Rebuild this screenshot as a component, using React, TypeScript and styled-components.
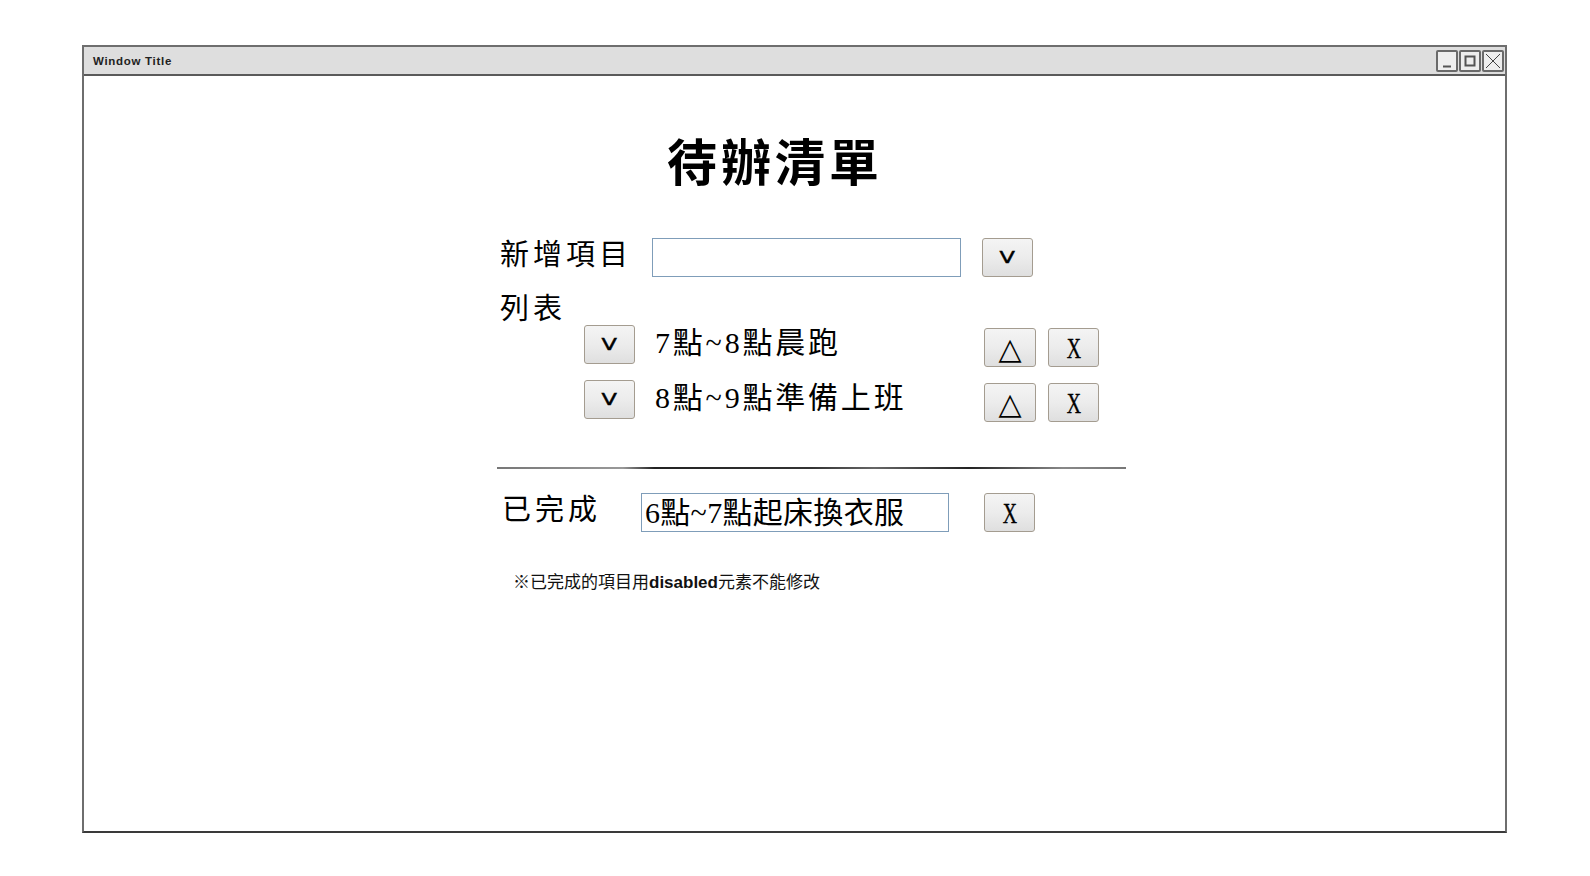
import React from 'react';
import styled, {createGlobalStyle} from 'styled-components';

const GlobalStyle = createGlobalStyle`
  html, body {
    margin: 0;
    padding: 0;
    background: #ffffff;
  }
  body {
    font-family: "Noto Sans CJK TC", "Liberation Sans", sans-serif;
    color: #000;
  }
`;

const CJK = `"Liberation Serif", "Noto Sans CJK TC", serif`;

const Page = styled.div`
  padding: 45px 0 0 82px;
`;

const Window = styled.div`
  width: 1425px;
  height: 788px;
  box-sizing: border-box;
  border: 2px solid #6e6e6e;
  border-bottom-color: #3a3a3a;
  display: flex;
  flex-direction: column;
`;

const TitleBar = styled.div`
  height: 27px;
  background: #dedede;
  border-bottom: 2px solid #5a5a5a;
  display: flex;
  align-items: center;
  justify-content: space-between;
  padding: 0 1px 0 9px;
`;

const TitleText = styled.span`
  font-family: "Liberation Sans", sans-serif;
  font-weight: 700;
  font-size: 11.5px;
  color: #222;
  letter-spacing: 0.7px;
`;

const Controls = styled.div`
  display: flex;
  gap: 1px;
`;

const ControlBox = styled.div`
  width: 18px;
  height: 18px;
  border: 2px solid #6a6a6a;
  border-radius: 2px;
  background: #eeeeee;
  display: flex;
  align-items: center;
  justify-content: center;
`;

const Content = styled.div`
  flex: 1;
  padding-left: 416px;
  display: flex;
  flex-direction: column;
`;

const Heading = styled.h1`
  margin: 53px 0 0 0;
  width: 550px;
  text-align: center;
  font-family: "Noto Sans CJK TC", serif;
  font-weight: 700;
  font-size: 50px;
  line-height: 60px;
  letter-spacing: 4px;
`;

const Row = styled.div<{$top: number; $indent?: number}>`
  display: flex;
  align-items: flex-start;
  margin-top: ${p => p.$top}px;
  margin-left: ${p => p.$indent ?? 0}px;
`;

const Label = styled.div<{$width: number}>`
  width: ${p => p.$width}px;
  flex: none;
  box-sizing: border-box;
  font-family: "Noto Sans CJK TC", serif;
  font-size: 29px;
  line-height: 28px;
  letter-spacing: 4px;
`;

const TextBox = styled.input<{$width: number}>`
  width: ${p => p.$width}px;
  height: 39px;
  box-sizing: border-box;
  border: 1px solid #7f9db9;
  padding: 0 3px 6px 3px;
  margin: 0;
  background: #fff;
  font-family: ${CJK};
  font-size: 30px;
  letter-spacing: 0.3px;
  color: #000;
  -webkit-text-fill-color: #000;
  opacity: 1;
  outline: none;
`;

const Button = styled.button<{$width?: number}>`
  width: ${p => p.$width ?? 51}px;
  height: 39px;
  flex: none;
  box-sizing: border-box;
  margin: 0;
  padding: 0;
  border: 1px solid #a49c90;
  border-radius: 3px;
  background: linear-gradient(#f4f4f4 0%, #ececec 50%, #dfdfdf 100%);
  display: flex;
  align-items: center;
  justify-content: center;
  color: #000;
`;

const ChevronLabel = styled.span`
  font-family: "DejaVu Sans", sans-serif;
  font-size: 18px;
  line-height: 1;
  display: inline-block;
  transform: scale(1.25, 0.9);
  -webkit-text-stroke: 0.5px #000;
`;

const TriangleLabel = styled.span`
  font-family: "DejaVu Sans", sans-serif;
  font-size: 30px;
  line-height: 1;
  margin-top: 3px;
`;

const CrossLabel = styled.span`
  font-family: "Liberation Serif", serif;
  font-size: 30px;
  line-height: 1;
  display: inline-block;
  transform: scaleX(0.66);
  -webkit-text-stroke: 0.4px #000;
`;

const ItemText = styled.div<{$width: number}>`
  width: ${p => p.$width}px;
  flex: none;
  font-family: ${CJK};
  font-size: 30px;
  line-height: 36px;
  letter-spacing: 2.8px;
`;

const RightButtons = styled.div`
  display: flex;
  gap: 12px;
  margin-top: 3px;
`;

const Divider = styled.div`
  width: 629px;
  height: 2px;
  margin: 45px 0 0 -3px;
  background: linear-gradient(
    to right,
    #777 0%,
    #999 20%,
    #222 25%,
    #333 50%,
    #666 60%,
    #222 75%,
    #888 90%,
    #777 100%
  );
`;

const Note = styled.p`
  margin: 41px 0 0 13px;
  font-family: "Liberation Sans", "Noto Sans CJK TC", sans-serif;
  font-size: 17px;
  line-height: 20px;
  color: #111;

  b {
    font-weight: 700;
  }
`;

const items = ['7點~8點晨跑', '8點~9點準備上班'];

const App = () => (
  <>
    <GlobalStyle />
    <Page>
      <Window>
        <TitleBar>
          <TitleText>Window Title</TitleText>
          <Controls>
            <ControlBox>
              <svg width="14" height="14" viewBox="0 0 14 14">
                <path d="M3 12.5h8" stroke="#555" strokeWidth="2" />
              </svg>
            </ControlBox>
            <ControlBox>
              <svg width="14" height="14" viewBox="0 0 14 14">
                <rect x="2.5" y="2.5" width="9" height="9" fill="none" stroke="#555" strokeWidth="2" />
              </svg>
            </ControlBox>
            <ControlBox>
              <svg width="16" height="16" viewBox="0 0 16 16">
                <path d="M1 1L15 15M15 1L1 15" stroke="#444" strokeWidth="1" />
              </svg>
            </ControlBox>
          </Controls>
        </TitleBar>
        <Content>
          <Heading>待辦清單</Heading>
          <Row $top={49}>
            <Label $width={152}>新增項目</Label>
            <TextBox $width={309} type="text" />
            <Button style={{marginLeft: 21}}>
              <ChevronLabel>V</ChevronLabel>
            </Button>
          </Row>
          <Row $top={15}>
            <Label $width={120}>列表</Label>
          </Row>
          {items.map((item, i) => (
            <Row key={item} $top={i === 0 ? 5 : 13} $indent={84}>
              <Button>
                <ChevronLabel>V</ChevronLabel>
              </Button>
              <ItemText $width={329} style={{marginLeft: 20}}>
                {item}
              </ItemText>
              <RightButtons>
                <Button $width={52}>
                  <TriangleLabel>△</TriangleLabel>
                </Button>
                <Button>
                  <CrossLabel>X</CrossLabel>
                </Button>
              </RightButtons>
            </Row>
          ))}
          <Divider />
          <Row $top={24}>
            <Label $width={141} style={{paddingLeft: 2}}>
              已完成
            </Label>
            <TextBox $width={308} type="text" disabled value="6點~7點起床換衣服" readOnly />
            <Button style={{marginLeft: 35}}>
              <CrossLabel>X</CrossLabel>
            </Button>
          </Row>
          <Note>
            ※已完成的項目用<b>disabled</b>元素不能修改
          </Note>
        </Content>
      </Window>
    </Page>
  </>
);

export default App;
